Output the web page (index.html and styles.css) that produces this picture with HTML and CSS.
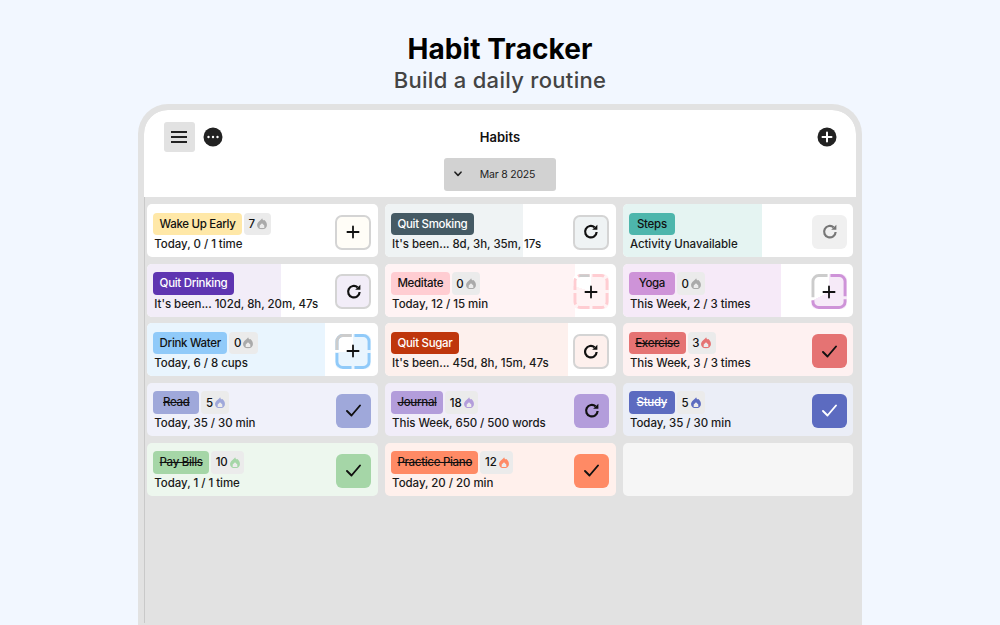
FILE: index.html
```html
<!DOCTYPE html>
<html lang="en">
<head>
<meta charset="utf-8">
<title>Habit Tracker</title>
<link rel="stylesheet" href="styles.css">
</head>
<body>
<svg class="defs" width="0" height="0" aria-hidden="true">
  <defs>
    <symbol id="flame" viewBox="0 0 12 14"><path fill-rule="evenodd" d="M6.200 .2C6.600 2.500 8.200 3.400 9.100 2.400 10.900 4.200 12 6.200 12 8.400 12 11.600 9.300 13.800 6 13.800S0 11.600 0 8.400C0 5 4 3.600 6.200 .2ZM6 6.300 3.200 9V12.300H8.800V9Z"/></symbol>
    <symbol id="plus" viewBox="0 0 14 14"><path d="M7 1.400V12.600M1.400 7H12.600" fill="none" stroke="currentColor" stroke-width="1.800" stroke-linecap="round"/></symbol>
    <symbol id="redo" viewBox="0 0 14 14"><path d="M12.300 7.200A5.200 5.200 0 1 1 10.500 3" fill="none" stroke="currentColor" stroke-width="2"/><path d="M8.300 5.300 13 5.300 13 .6Z" fill="currentColor"/></symbol>
    <symbol id="check" viewBox="0 0 15 15"><path d="M1 8 5.500 12.500 14 2.500" fill="none" stroke="currentColor" stroke-width="1.900" stroke-linecap="round" stroke-linejoin="round"/></symbol>
  </defs>
</svg>
<header class="page-head">
  <h1>Habit Tracker</h1>
  <p>Build a daily routine</p>
</header>
<main class="device">
  <div class="screen">
    <section class="app-bar">
      <div class="nav-row">
        <div class="nav-left">
          <button class="menu-btn" aria-label="Menu"><span></span><span></span><span></span></button>
          <button class="round-btn" aria-label="More"><svg viewBox="0 0 20 20" width="20" height="20"><circle cx="10" cy="10" r="9.500" fill="#222"/><circle cx="5.500" cy="10" r="1.200" fill="#fff"/><circle cx="10" cy="10" r="1.200" fill="#fff"/><circle cx="14.500" cy="10" r="1.200" fill="#fff"/></svg></button>
        </div>
        <div class="nav-title">Habits</div>
        <button class="round-btn nav-right" aria-label="Add"><svg viewBox="0 0 20 20" width="20" height="20"><circle cx="10" cy="10" r="9.500" fill="#222"/><path d="M10 5.500V14.500M5.500 10H14.500" stroke="#fff" stroke-width="2" stroke-linecap="round"/></svg></button>
      </div>
      <div class="date-wrap">
        <div class="date-btn">
          <svg class="chev" viewBox="0 0 8 6" width="8" height="6"><path d="M1 1.200 4 4.400 7 1.200" fill="none" stroke="#222" stroke-width="1.600" stroke-linecap="round" stroke-linejoin="round"/></svg>
          <span>Mar 8 2025</span>
        </div>
      </div>
    </section>
    <section class="grid">

      <article class="card">
        <div class="info">
          <div class="tags"><span class="tag" style="background:#ffe8a8">Wake Up Early</span><span class="streak">7<svg class="fl" style="color:#aaa"><use href="#flame"/></svg></span></div>
          <div class="detail">Today, 0 / 1 time</div>
        </div>
        <div class="action ring" style="background:#fffdf7"><svg class="ic"><use href="#plus"/></svg></div>
      </article>

      <article class="card">
        <div class="fill" style="width:60%;background:#eff3f4"></div>
        <div class="info">
          <div class="tags"><span class="tag light" style="background:#455a64">Quit Smoking</span></div>
          <div class="detail">It's been... 8d, 3h, 35m, 17s</div>
        </div>
        <div class="action ring" style="background:#eff3f4"><svg class="ic rd"><use href="#redo"/></svg></div>
      </article>

      <article class="card">
        <div class="fill" style="width:60.500%;background:#e5f4f2"></div>
        <div class="info">
          <div class="tags"><span class="tag" style="background:#4db6ac">Steps</span></div>
          <div class="detail">Activity Unavailable</div>
        </div>
        <div class="action plain" style="background:#f0f0f0;color:#777"><svg class="ic rd"><use href="#redo"/></svg></div>
      </article>

      <article class="card">
        <div class="fill" style="width:58.200%;background:#f2edf8"></div>
        <div class="info">
          <div class="tags"><span class="tag light" style="background:#5e35b1">Quit Drinking</span></div>
          <div class="detail">It's been... 102d, 8h, 20m, 47s</div>
        </div>
        <div class="action ring" style="background:#f2edf8"><svg class="ic rd"><use href="#redo"/></svg></div>
      </article>

      <article class="card">
        <div class="fill" style="width:82.600%;background:#fff3f4"></div>
        <div class="info">
          <div class="tags"><span class="tag" style="background:#ffcdd2">Meditate</span><span class="streak">0<svg class="fl" style="color:#aaa"><use href="#flame"/></svg></span></div>
          <div class="detail">Today, 12 / 15 min</div>
        </div>
        <div class="action segs" style="background:conic-gradient(#fff3f4 80%,#fff 80%)">
          <svg class="seg-svg" viewBox="0 0 36 36"><path pathLength="100" stroke-dasharray="10 2.500" stroke-dashoffset="-1.250" d="M18 1.500H28.500A6 6 0 0 1 34.500 7.500V28.500A6 6 0 0 1 28.500 34.500H7.500A6 6 0 0 1 1.500 28.500V7.500A6 6 0 0 1 7.500 1.500H18" fill="none" stroke="#ffcdd2" stroke-width="3"/><path d="M6 1.700H16.500" fill="none" stroke="#ccc" stroke-width="3"/></svg>
          <svg class="ic"><use href="#plus"/></svg>
        </div>
      </article>

      <article class="card">
        <div class="fill" style="width:68.700%;background:#f6eaf8"></div>
        <div class="info">
          <div class="tags"><span class="tag" style="background:#ce93d8">Yoga</span><span class="streak">0<svg class="fl" style="color:#aaa"><use href="#flame"/></svg></span></div>
          <div class="detail">This Week, 2 / 3 times</div>
        </div>
        <div class="action segs" style="background:conic-gradient(#f6eaf8 67%,#fff 67%)">
          <svg class="seg-svg" viewBox="0 0 36 36"><path d="M19.500 1.500H28.500A6 6 0 0 1 34.500 7.500V23" fill="none" stroke="#ce93d8" stroke-width="3"/><path d="M34.500 26V28.500A6 6 0 0 1 28.500 34.500H7.500A6 6 0 0 1 1.500 28.500V27" fill="none" stroke="#ce93d8" stroke-width="3"/><path d="M1.500 24V7.500A6 6 0 0 1 7.500 1.500H16.500" fill="none" stroke="#ccc" stroke-width="3"/></svg>
          <svg class="ic"><use href="#plus"/></svg>
        </div>
      </article>

      <article class="card">
        <div class="fill" style="width:77.300%;background:#e9f5fe"></div>
        <div class="info">
          <div class="tags"><span class="tag" style="background:#90caf9">Drink Water</span><span class="streak">0<svg class="fl" style="color:#aaa"><use href="#flame"/></svg></span></div>
          <div class="detail">Today, 6 / 8 cups</div>
        </div>
        <div class="action segs" style="background:conic-gradient(#e9f5fe 75%,#fff 75%)">
          <svg class="seg-svg" viewBox="0 0 36 36"><path pathLength="100" stroke-dasharray="22.500 2.500" stroke-dashoffset="-1.250" d="M18 1.500H28.500A6 6 0 0 1 34.500 7.500V28.500A6 6 0 0 1 28.500 34.500H7.500A6 6 0 0 1 1.500 28.500V7.500A6 6 0 0 1 7.500 1.500H18" fill="none" stroke="#90caf9" stroke-width="3"/><path d="M1.500 16.500V7.500A6 6 0 0 1 7.500 1.500H16.500" fill="none" stroke="#ccc" stroke-width="3"/></svg>
          <svg class="ic"><use href="#plus"/></svg>
        </div>
      </article>

      <article class="card">
        <div class="fill" style="width:79.200%;background:#fdf0ed"></div>
        <div class="info">
          <div class="tags"><span class="tag light" style="background:#bf360c">Quit Sugar</span></div>
          <div class="detail">It's been... 45d, 8h, 15m, 47s</div>
        </div>
        <div class="action ring" style="background:#fdf0ed"><svg class="ic rd"><use href="#redo"/></svg></div>
      </article>

      <article class="card" style="background:#fef1f1">
        <div class="info">
          <div class="tags"><span class="tag done" style="background:#e57373">Exercise</span><span class="streak">3<svg class="fl" style="color:#e57373"><use href="#flame"/></svg></span></div>
          <div class="detail">This Week, 3 / 3 times</div>
        </div>
        <div class="action plain" style="background:#e57373"><svg class="ic ck"><use href="#check"/></svg></div>
      </article>

      <article class="card" style="background:#f0f1fa">
        <div class="info">
          <div class="tags"><span class="tag done" style="background:#9fa8da">Read</span><span class="streak">5<svg class="fl" style="color:#9fa8da"><use href="#flame"/></svg></span></div>
          <div class="detail">Today, 35 / 30 min</div>
        </div>
        <div class="action plain" style="background:#9fa8da"><svg class="ic ck"><use href="#check"/></svg></div>
      </article>

      <article class="card" style="background:#f1edf9">
        <div class="info">
          <div class="tags"><span class="tag done" style="background:#b39ddb">Journal</span><span class="streak">18<svg class="fl" style="color:#b39ddb"><use href="#flame"/></svg></span></div>
          <div class="detail">This Week, 650 / 500 words</div>
        </div>
        <div class="action plain" style="background:#b39ddb"><svg class="ic rd"><use href="#redo"/></svg></div>
      </article>

      <article class="card" style="background:#ebeef7">
        <div class="info">
          <div class="tags"><span class="tag done light" style="background:#5c6bc0">Study</span><span class="streak">5<svg class="fl" style="color:#5c6bc0"><use href="#flame"/></svg></span></div>
          <div class="detail">Today, 35 / 30 min</div>
        </div>
        <div class="action plain light" style="background:#5c6bc0"><svg class="ic ck"><use href="#check"/></svg></div>
      </article>

      <article class="card" style="background:#edf7ee">
        <div class="info">
          <div class="tags"><span class="tag done" style="background:#a5d6a7">Pay Bills</span><span class="streak">10<svg class="fl" style="color:#a5d6a7"><use href="#flame"/></svg></span></div>
          <div class="detail">Today, 1 / 1 time</div>
        </div>
        <div class="action plain" style="background:#a5d6a7"><svg class="ic ck"><use href="#check"/></svg></div>
      </article>

      <article class="card" style="background:#fff0ec">
        <div class="info">
          <div class="tags"><span class="tag done" style="background:#ff8a65">Practice Piano</span><span class="streak">12<svg class="fl" style="color:#ff8a65"><use href="#flame"/></svg></span></div>
          <div class="detail">Today, 20 / 20 min</div>
        </div>
        <div class="action plain" style="background:#ff8a65"><svg class="ic ck"><use href="#check"/></svg></div>
      </article>

      <article class="card empty"></article>
    </section>
  </div>
</main>
</body>
</html>
```
FILE: styles.css
```css
* { box-sizing: border-box; }
html, body { height: 100%; }
body {
  margin: 0;
  height: 625px;
  overflow: hidden;
  background: #f2f7ff;
  font-family: Inter, "Liberation Sans", sans-serif;
  color: #111;
  display: flex;
  flex-direction: column;
  align-items: center;
}
.defs { position: absolute; }
.page-head { text-align: center; padding-top: 33px; height: 104px; }
.page-head h1 { margin: 0; font-size: 28px; line-height: 32px; font-weight: 700; color: #000; letter-spacing: .1px; }
.page-head p { margin: 0; font-size: 22px; line-height: 31px; font-weight: 500; color: #444; letter-spacing: .3px; }
.device {
  width: 724px;
  flex: 1;
  min-height: 0;
  border: 6px solid #e2e2e2;
  border-bottom: 0;
  border-radius: 30px 30px 0 0;
  background: #e2e2e2;
  overflow: hidden;
}
.screen {
  height: 100%;
  border-radius: 24px 24px 0 0;
  overflow: hidden;
  background: #e2e2e2;
}
.app-bar { background: #fff; height: 86.700px; padding: 11.700px 19.500px 0 19.500px; }
.nav-row { display: grid; grid-template-columns: 1fr auto 1fr; align-items: center; height: 30px; }
.nav-left { display: flex; align-items: center; gap: 8px; }
.nav-right { justify-self: end; }
.nav-title { font-size: 13px; font-weight: 600; color: #111; }
.menu-btn {
  width: 31px; height: 30px; border: 0; padding: 0; border-radius: 3px; background: #e2e2e2;
  display: flex; flex-direction: column; align-items: center; justify-content: center; gap: 3px;
}
.menu-btn span { display: block; width: 16px; height: 2px; background: #222; }
.round-btn { width: 20px; height: 20px; border: 0; padding: 0; background: none; display: block; }
.date-wrap { display: flex; justify-content: center; margin-top: 6.300px; }
.date-btn {
  width: 112px; height: 33px; background: #d2d2d2; border-radius: 3px;
  display: flex; align-items: center; padding-left: 10px; gap: 17.700px;
  font-size: 10.500px; color: #222; letter-spacing: -.2px;
}
.grid {
  display: grid;
  grid-template-columns: repeat(3, 1fr);
  grid-auto-rows: 53px;
  align-content: start;
  column-gap: 7.400px;
  row-gap: 6.600px;
  height: 426px;
  padding: 7.500px 2.700px 0 2.300px;
  border-left: 1px solid #c9c9c9;
}
.card {
  position: relative;
  border-radius: 5px;
  background: #fff;
  overflow: hidden;
  display: flex;
  align-items: center;
  justify-content: space-between;
  padding: 0 6.300px 0 6px;
}
.card.empty { background: #f6f6f6; }
.fill { position: absolute; left: 0; top: 0; bottom: 0; }
.info { position: relative; align-self: flex-start; display: flex; flex-direction: column; gap: 2px; padding-top: 8.500px; }
.tags { display: flex; gap: 2px; height: 22.500px; }
.tag {
  min-width: 46px; padding: 0 6.300px; border-radius: 4px; text-align: center;
  font-size: 11.500px; font-weight: 500; line-height: 22.500px; letter-spacing: -.3px; color: #111;
  white-space: nowrap;
}
.tag.light { color: #fff; }
.tag.done { text-decoration: line-through; }
.streak {
  display: flex; align-items: center; gap: 2px; padding: 0 4.300px 0 4.700px; border-radius: 4px;
  background: #ebebeb; font-size: 11.500px; font-weight: 500;
  letter-spacing: -.1px;
}
.fl { width: 10px; height: 11.500px; fill: currentColor; }
.detail { font-size: 11.500px; font-weight: 500; line-height: 15px; letter-spacing: -.05px; padding-left: 1px; color: #1a1a1a; white-space: nowrap; }
.action {
  position: relative; width: 36px; height: 35px; flex: none; margin-top: 3px;
  border-radius: 6px; display: flex; align-items: center; justify-content: center;
  color: #111;
}
.action.ring { border: 2.500px solid #d4d4d4; border-radius: 7px; }
.action.plain { width: 35px; height: 34px; }
.action.light { color: #fff; }
.ic { width: 14px; height: 14px; }
.ic.rd { width: 15.500px; height: 15.500px; }
.ic.ck { width: 15px; height: 15px; }
.seg-svg { position: absolute; inset: 0; width: 100%; height: 100%; }
.action.segs .ic { position: relative; }
```
